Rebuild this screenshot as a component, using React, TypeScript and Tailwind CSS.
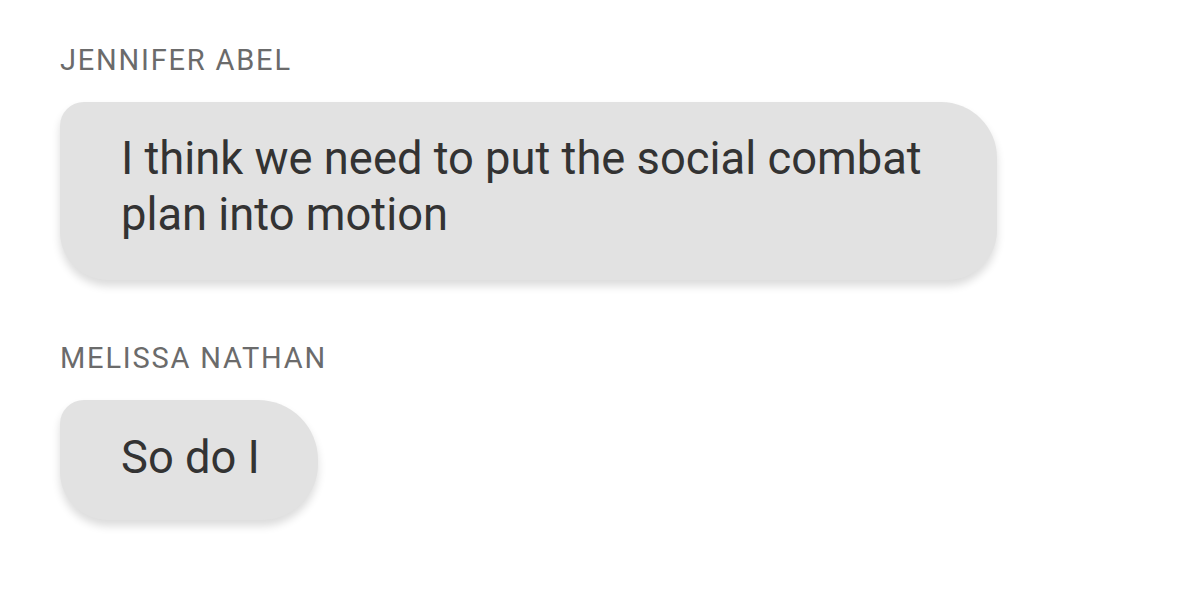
export default function App() {
  return (
    <div className="w-[1179px] h-[604px] bg-white font-['Roboto',sans-serif] pl-[60px] pt-[45px]">
      <div className="text-[29px] leading-[30px] tracking-[1.8px] text-[#6b6b6b]">JENNIFER ABEL</div>
      <div className="mt-[27px] w-[937px] h-[178px] bg-[#e2e2e2] rounded-tl-[24px] rounded-tr-[56px] rounded-br-[50px] rounded-bl-[48px] shadow-[0_6px_9px_rgba(0,0,0,0.14)] pl-[61px] pr-[40px] pt-[29px] text-[45.3px] leading-[56px] text-[#333333]">
        I think we need to put the social combat plan into motion
      </div>
      <div className="mt-[63px] text-[29px] leading-[30px] tracking-[1.8px] text-[#6b6b6b]">MELISSA NATHAN</div>
      <div className="mt-[27px] w-[258px] h-[120px] bg-[#e2e2e2] rounded-tl-[24px] rounded-tr-[60px] rounded-br-[56px] rounded-bl-[48px] shadow-[0_6px_9px_rgba(0,0,0,0.14)] pl-[61px] pt-[29px] text-[45.3px] leading-[58px] text-[#333333]">
        So do I
      </div>
    </div>
  );
}
